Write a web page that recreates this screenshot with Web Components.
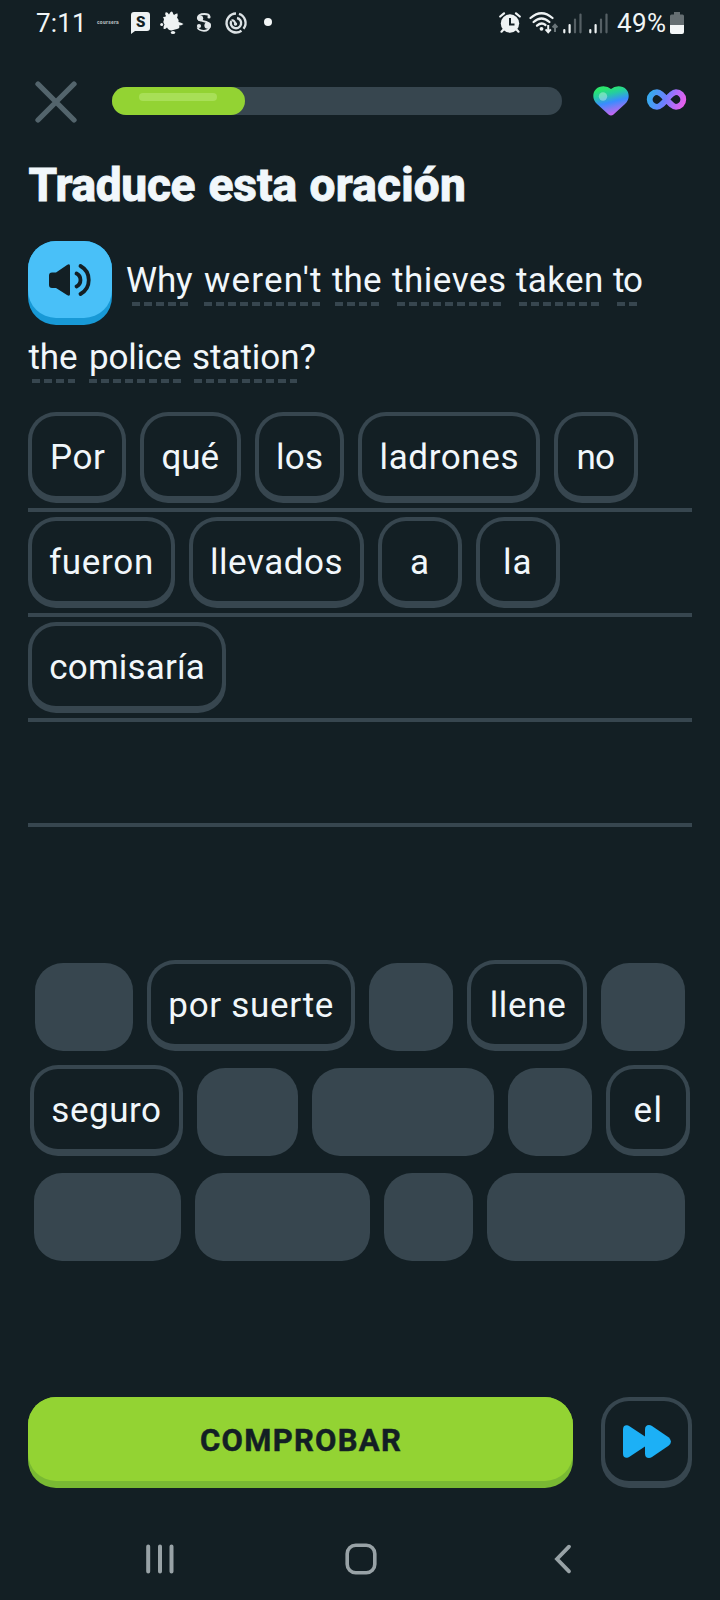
<!DOCTYPE html>
<html lang="es">
<head>
<meta charset="utf-8">
<title>Traduce esta oración</title>
<style>
html,body{margin:0;background:#131f24}
body{width:720px;height:1600px;overflow:hidden;font-family:Roboto,"Noto Sans",sans-serif;color:#f1f7fb}
</style>
</head>
<body>
<lesson-screen></lesson-screen>
<script>
const define = (name, html, ready) => {
  const t = document.createElement('template');
  t.innerHTML = html;
  customElements.define(name, class extends HTMLElement {
    connectedCallback() {
      if (this.shadowRoot) return;
      this.attachShadow({mode: 'open'}).appendChild(t.content.cloneNode(true));
      if (ready) ready(this, this.shadowRoot);
    }
  });
};
const ctx = document.createElement('canvas').getContext('2d');

/* Text tracked so that its visible ink spans exactly `w` pixels. */
define('fit-word', `<style>
:host{display:block;flex:none;white-space:pre;text-align:left}
span{display:block;-webkit-text-stroke:var(--stroke,0) currentColor;stroke-linejoin:round}
</style><span></span>`, (el, root) => {
  const text = el.getAttribute('text'), w = +el.getAttribute('w'), size = +(el.getAttribute('size') || 35);
  const weight = el.getAttribute('weight') || 400, s = root.querySelector('span');
  ctx.font = `${weight} ${size}px Roboto`;
  const m = ctx.measureText(text), ink = m.actualBoundingBoxRight + m.actualBoundingBoxLeft;
  el.style.width = w + 'px';
  el.style.font = `${weight} ${size}px/${el.getAttribute('lh') || 82}px Roboto, "Noto Sans", sans-serif`;
  s.style.letterSpacing = (text.length > 1 ? (w - ink) / (text.length - 1) : 0) + 'px';
  s.style.marginLeft = m.actualBoundingBoxLeft + 'px';
  s.textContent = text;
});

const icons = {
  bubble: [19, 22, `<path d="M3 0H16Q19 0 19 3V16Q19 19 16 19H4L0 22V3Q0 0 3 0Z" fill="#eef2f3"/><text x="9.7" y="15" text-anchor="middle" font-family="Roboto" font-weight="900" font-size="15" fill="#131f24">S</text>`],
  splash: [24, 24, `<path d="M5.500 1.500Q7 .5 9 3.500Q11 -.8 12.500 1Q13 3 14 4Q16 2 17.500 2.500Q18 4.500 17 6.500Q19 8.500 18.500 11Q21 11.500 23.500 13Q21.500 14.500 19 14.500Q20.500 17 17 18Q14 18.500 11.500 19.500Q8.500 19.500 7 16.500Q4.500 19 3.500 17.500Q3.300 15 4.500 13.500Q2.500 11 4 9Q4 7.500 3 6Q6 6 6 5Q4.500 3 5.500 1.500Z" fill="#eef2f3"/><circle cx="1.700" cy="13.500" r="1.500" fill="#eef2f3"/><ellipse cx="13" cy="21.500" rx="2.200" ry="1.500" fill="#eef2f3"/>`],
  swirl: [16, 19, `<path d="M13.500 3.500Q13 1 8.500 1C3.500 1 1.800 3 1.800 5C1.800 9.500 13.800 6.500 13.800 12.500C13.800 16 11 17.800 8 17.800Q3 17.800 1.500 14.500" fill="none" stroke="#e3e8ea" stroke-width="1.800"/><circle cx="4.300" cy="5.300" r="2.900" fill="#e3e8ea"/><circle cx="11.700" cy="12.500" r="3.300" fill="#e3e8ea"/><circle cx="3" cy="13" r="2.100" fill="#e3e8ea"/><circle cx="13" cy="4" r="1.600" fill="#e3e8ea"/>`],
  target: [22, 22, `<g fill="none" stroke="#dce2e5" stroke-width="2.400"><path d="M11 1.500A9.500 9.500 0 1 0 16.500 18.800"/><path d="M14 1.900A9.500 9.500 0 0 1 18.500 16.800"/><path d="M6.200 9A5.200 5.200 0 1 0 12 6"/><path d="M6.500 8.500Q9.500 7.500 10.500 12.500" stroke-width="2"/></g><circle cx="10.500" cy="12" r="1.700" fill="#dce2e5"/>`],
  dot: [8, 8, `<circle cx="4" cy="4" r="4" fill="#f3f6f7"/>`],
  alarm: [22, 21, `<circle cx="11" cy="11.500" r="9.200" fill="#eef2f3"/><g fill="none" stroke="#eef2f3" stroke-width="2.200" stroke-linecap="round"><path d="M1.200 4.500L5 1.300M20.800 4.500L17 1.300M4.500 17.500L2.500 19.700M17.500 17.500L19.500 19.700"/></g><path d="M11 6V12.500H15.500" fill="none" stroke="#131f24" stroke-width="2"/>`],
  wifi: [29, 22, `<g fill="none" stroke="#eef2f3" stroke-width="2.300" stroke-linecap="round"><path d="M1.500 6Q12.500-3.600 23.500 6M4.600 10Q12.500 3 20.400 10M8 13.700Q12.500 9.800 16.500 13"/></g><circle cx="12.500" cy="16.800" r="1.900" fill="#eef2f3"/><path d="M19.200 13V20M16.600 17.400L19.200 20.300L21.800 17.400" fill="none" stroke="#eef2f3" stroke-width="2"/><path d="M26 20V13M23.600 15.500L26 12.800L28.400 15.500" fill="none" stroke="#697478" stroke-width="2"/>`],
  signal: [19, 21, `<g stroke-width="2.200" stroke-linecap="round"><path d="M1.300 17V19.300M6.600 12V19.300" stroke="#eef2f3"/><path d="M12 6.500V19.300M17.500 1.500V19.300" stroke="#566065"/></g>`],
  battery: [14, 22, `<path d="M4 0H10V2.500H12.500Q14 2.500 14 4V13H0V4Q0 2.500 1.500 2.500H4Z" fill="#656e72"/><path d="M0 13H14V20Q14 22 12 22H2Q0 22 0 20Z" fill="#f3f6f7"/>`],
  close: [42, 42, `<path d="M3 3L39 39M39 3L3 39" stroke="#53646c" stroke-width="5.300" stroke-linecap="round"/>`],
  heart: [36, 30, `<defs><linearGradient id="h" x1=".3" y1="0" x2=".6" y2="1"><stop offset=".08" stop-color="#2be56d"/><stop offset=".28" stop-color="#25cda0"/><stop offset=".55" stop-color="#398cff"/><stop offset=".75" stop-color="#8379f5"/><stop offset="1" stop-color="#d561f1"/></linearGradient></defs><path d="M18 3Q15 .3 10.500 .3C4.500 .3 .3 4.500 .3 10Q.3 14.500 4 18L15.500 28.600Q18 30.600 20.500 28.600L32 18Q35.700 14.500 35.700 10C35.700 4.500 31.500 .3 25.500 .3Q21 .3 18 3Z" fill="url(#h)"/><circle cx="10" cy="10.500" r="4.200" fill="#fff" opacity=".35"/>`],
  infinity: [39, 21, `<defs><linearGradient id="i" gradientUnits="userSpaceOnUse" x1="1" y1="4" x2="38" y2="17"><stop offset=".08" stop-color="#39a8ef"/><stop offset=".45" stop-color="#6b80ff"/><stop offset=".7" stop-color="#b16cfa"/><stop offset="1" stop-color="#ee5ee9"/></linearGradient></defs><path d="M19.500 10.500C15.500 6 13 3.200 10 3.200A7.300 7.300 0 0 0 10 17.800C13 17.800 15.500 15 19.500 10.500S26 3.200 29 3.200A7.300 7.300 0 0 1 29 17.800C26 17.800 23.500 15 19.500 10.500Z" fill="none" stroke="url(#i)" stroke-width="5.800"/>`],
  speaker: [42, 32, `<path d="M3 8.500H7L18 1Q21 -.8 21 2V30Q21 32.800 18 31L7 24H3Q0 24 0 21V11.500Q0 8.500 3 8.500Z" fill="#131f24"/><path d="M27.500 9.500A7.300 7.300 0 0 1 27.500 22.500M31.500 2A16 16 0 0 1 31.500 30" fill="none" stroke="#131f24" stroke-width="3.800" stroke-linecap="round"/>`],
  forward: [48, 33, `<g fill="#1cb0f6"><path d="M0 4.500Q0 0 4 .2Q5 .2 6.500 1.200L22 11.500V21.500L6.500 31.800Q5 32.800 4 32.800Q0 33 0 28.500Z"/><path d="M22 4.500Q22 0 26 0Q27.500 0 29 1L45.500 12.300Q48 14.500 48 16.500Q48 18.500 45.500 20.700L29 32Q27.500 33 26 33Q22 33 22 28.500Z"/></g>`],
  recents: [28, 30, `<path d="M2.200 2.500V27.500M14 2.500V27.500M25.500 2.500V27.500" stroke="#98a2a6" stroke-width="4" stroke-linecap="round"/>`],
  home: [32, 32, `<rect x="2.200" y="2.200" width="27.600" height="27.600" rx="8.500" fill="none" stroke="#98a2a6" stroke-width="3.600"/>`],
  back: [18, 30, `<path d="M15 2.700L3 15L15 27.300" fill="none" stroke="#98a2a6" stroke-width="3.800" stroke-linecap="round"/>`]
};
define('ui-icon', `<style>:host{display:block;flex:none}svg{display:block;overflow:visible}</style>`, (el, root) => {
  const [w, h, body] = icons[el.getAttribute('name')];
  root.innerHTML += `<svg width="${w}" height="${h}" viewBox="0 0 ${w} ${h}">${body}</svg>`;
});

define('status-bar', `<style>
:host{display:flex;height:46px;align-items:flex-start;box-sizing:border-box;padding-left:36px;color:#f1f5f6}
</style>
<fit-word text="7:11" w="46" size="26" lh="46"></fit-word>
<fit-word text="coursera" w="22" size="5" weight="900" lh="45" style="margin-left:15px;color:#a9b1b4"></fit-word>
<ui-icon name="bubble" style="margin:12px 0 0 12px"></ui-icon>
<ui-icon name="splash" style="margin:11px 0 0 10px"></ui-icon>
<ui-icon name="swirl" style="margin:13px 0 0 12px"></ui-icon>
<ui-icon name="target" style="margin:12px 0 0 13px"></ui-icon>
<ui-icon name="dot" style="margin:18px 0 0 17px"></ui-icon>
<ui-icon name="alarm" style="margin:12px 0 0 227px"></ui-icon>
<ui-icon name="wifi" style="margin:12px 0 0 8px"></ui-icon>
<ui-icon name="signal" style="margin:13px 0 0 5px"></ui-icon>
<ui-icon name="signal" style="margin:13px 0 0 7px"></ui-icon>
<fit-word text="49%" w="48" size="26" lh="46" style="margin-left:9px"></fit-word>
<ui-icon name="battery" style="margin:12px 0 0 5px"></ui-icon>`);

define('progress-header', `<style>
:host{display:flex;height:77px;box-sizing:border-box;padding:35px 0 0 35px}
.track{width:450px;height:28px;margin:6px 0 0 35px;border-radius:14px;background:#37464f}
.fill{width:133px;height:28px;border-radius:14px;background:#93d333;box-sizing:border-box;padding:6px 0 0 27px}
.shine{width:78px;height:8px;border-radius:4px;background:#a8df57}
</style>
<ui-icon name="close"></ui-icon>
<div class="track"><div class="fill"><div class="shine"></div></div></div>
<ui-icon name="heart" style="margin:5px 0 0 30.500px"></ui-icon>
<ui-icon name="infinity" style="margin:8px 0 0 18px"></ui-icon>`);

/* A prompt word; its dashed hint line starts at d and is dw wide. */
define('hint-word', `<style>:host{display:block;flex:none;height:var(--h)}</style>`, (el, root) => {
  const g = n => el.getAttribute(n), over = Math.min(0, g('d'));
  el.style.width = g('w') + 'px';
  el.style.marginLeft = g('gap') + 'px';
  root.innerHTML += `<style>div{height:100%;margin-left:${over}px;background:repeating-linear-gradient(90deg,#37464f 0 8px,transparent 8px 12px) no-repeat ${Math.max(0, g('d'))}px var(--y)/${g('dw')}px 4px}fit-word{margin-left:${-over}px}</style><div><fit-word text="${g('text')}" w="${g('w')}" lh="${g('lh')}"></fit-word></div>`;
});

define('speaker-button', `<style>
:host{display:flex;width:84px;height:84px;box-sizing:border-box;border-radius:28px;background:#1899d6;flex:none}
div{width:84px;height:77px;border-radius:28px;background:#49c0f8;display:flex;align-items:center;justify-content:center}
</style><div><ui-icon name="speaker"></ui-icon></div>`);

define('prompt-text', `<style>
:host{display:block;padding:0 0 0 28px}
.a{display:flex;--h:84px;--y:61px}
.b{display:flex;--h:82px;--y:54px}
</style>
<div class="a"><speaker-button></speaker-button>
<hint-word text="Why" w="66" gap="15" d="5" dw="57" lh="79"></hint-word>
<hint-word text="weren't" w="117" gap="11" d="0" dw="116" lh="79"></hint-word>
<hint-word text="the" w="49" gap="11" d="3" dw="44" lh="79"></hint-word>
<hint-word text="thieves" w="113" gap="11" d="5" dw="104" lh="79"></hint-word>
<hint-word text="taken" w="85" gap="11" d="3" dw="80" lh="79"></hint-word>
<hint-word text="to" w="29" gap="12" d="4" dw="21" lh="79"></hint-word></div>
<div class="b">
<hint-word text="the" w="48.500" gap="0.500" d="3.500" dw="43" lh="66"></hint-word>
<hint-word text="police" w="90" gap="14" d="-2" dw="92" lh="66"></hint-word>
<hint-word text="station?" w="122.500" gap="12" d="1" dw="103" lh="66"></hint-word></div>`);

define('word-chip', `<style>
:host{display:block;flex:none;box-sizing:border-box;height:91px;border-radius:28px;background:#37464f;padding:4px 4px 7px}
:host([ghost]){height:88px;margin-top:3px}
div{height:80px;border-radius:24px;background:#131f24;box-sizing:border-box;padding-top:1px}
:host([ghost]) div{display:none}
</style><div></div>`, (el, root) => {
  const g = n => el.getAttribute(n);
  el.style.width = g('width') + 'px';
  if (g('text')) root.querySelector('div').innerHTML = `<fit-word text="${g('text')}" w="${g('w')}" style="margin-left:${g('x') - 4}px"></fit-word>`;
});

define('answer-row', `<style>
:host{display:flex;gap:14px;height:105px;box-sizing:border-box;padding-top:5px;margin:0 28px;border-bottom:4px solid #37464f}
</style><slot></slot>`);
define('bank-row', `<style>
:host{display:flex;gap:14px;height:105px;justify-content:center}
</style><slot></slot>`);

define('action-bar', `<style>
:host{display:flex;gap:28px;padding:0 28px}
.go{width:545px;height:91px;border-radius:28px;background:#79b933;flex:none}
.face{height:84px;border-radius:28px;background:#93d333;color:#131f24;padding-left:173px;--stroke:.5px}
.skip{width:91px;height:91px;border-radius:28px;background:#37464f;box-sizing:border-box;padding:4px 4px 7px}
.in{height:80px;border-radius:24px;background:#131f24;box-sizing:border-box;padding:23.500px 0 0 18px}
</style>
<div class="go"><div class="face"><fit-word text="COMPROBAR" w="200" size="31" weight="700" lh="88"></fit-word></div></div>
<div class="skip"><div class="in"><ui-icon name="forward"></ui-icon></div></div>`);

define('nav-bar', `<style>
:host{display:flex;align-items:center;height:32px}
</style>
<ui-icon name="recents" style="margin-left:146px"></ui-icon>
<ui-icon name="home" style="margin-left:171px"></ui-icon>
<ui-icon name="back" style="margin-left:176.500px"></ui-icon>`);

define('lesson-screen', `<style>
:host{display:block;width:720px;height:1600px;background:#131f24;overflow:hidden}
.title{display:flex;height:118px;box-sizing:border-box;padding:34px 0 0 28.500px}
.title fit-word{--stroke:.8px}
.bank{margin-top:133px}
.last{margin-left:-2px}
action-bar{margin-top:122px}
nav-bar{margin-top:55px}
</style>
<status-bar></status-bar>
<progress-header></progress-header>
<div class="title">
<fit-word text="Traduce" w="166" size="46" weight="800" lh="57"></fit-word>
<fit-word text="esta" w="87" size="46" weight="800" lh="57" style="margin-left:15px"></fit-word>
<fit-word text="oración" w="153.500" size="46" weight="800" lh="57" style="margin-left:14px"></fit-word>
</div>
<prompt-text></prompt-text>
<answer-row>
<word-chip width="98" text="Por" w="53" x="24"></word-chip>
<word-chip width="101" text="qué" w="56" x="22.500"></word-chip>
<word-chip width="89" text="los" w="44" x="23"></word-chip>
<word-chip width="182" text="ladrones" w="136" x="23.500"></word-chip>
<word-chip width="84" text="no" w="35.500" x="24.500"></word-chip>
</answer-row>
<answer-row>
<word-chip width="147" text="fueron" w="101" x="22"></word-chip>
<word-chip width="175" text="llevados" w="129.500" x="23"></word-chip>
<word-chip width="84" text="a" w="16" x="33"></word-chip>
<word-chip width="84" text="la" w="25.500" x="29"></word-chip>
</answer-row>
<answer-row><word-chip width="198" text="comisaría" w="153.500" x="22.300"></word-chip></answer-row>
<answer-row></answer-row>
<div class="bank">
<bank-row>
<word-chip ghost width="98"></word-chip>
<word-chip width="208" text="por suerte" w="162.500" x="23.300"></word-chip>
<word-chip ghost width="84"></word-chip>
<word-chip width="120" text="llene" w="73.500" x="24.700"></word-chip>
<word-chip ghost width="84"></word-chip>
</bank-row>
<bank-row>
<word-chip width="153" text="seguro" w="107.700" x="22.300"></word-chip>
<word-chip ghost width="101"></word-chip>
<word-chip ghost width="182"></word-chip>
<word-chip ghost width="84"></word-chip>
<word-chip width="84" text="el" w="25" x="28.500"></word-chip>
</bank-row>
<bank-row class="last">
<word-chip ghost width="147"></word-chip>
<word-chip ghost width="175"></word-chip>
<word-chip ghost width="89"></word-chip>
<word-chip ghost width="198"></word-chip>
</bank-row>
</div>
<action-bar></action-bar>
<nav-bar></nav-bar>`);
</script>
</body>
</html>
